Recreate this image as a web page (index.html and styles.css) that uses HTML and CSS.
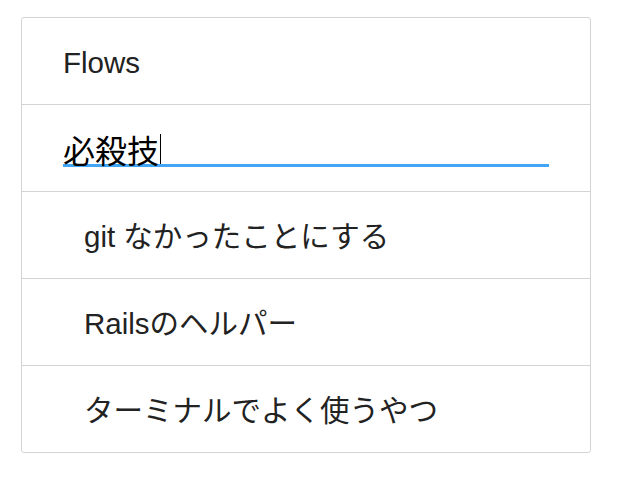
FILE: index.html
```html
<!DOCTYPE html>
<html lang="ja">
<head>
<meta charset="utf-8">
<title>Flows</title>
<link rel="stylesheet" href="styles.css">
</head>
<body>
<div class="card">
  <div class="row header">Flows</div>
  <div class="row search">
    <div class="field"><span class="value">必殺技</span><span class="caret"></span></div>
  </div>
  <div class="row item">git なかったことにする</div>
  <div class="row item">Railsのヘルパー</div>
  <div class="row item">ターミナルでよく使うやつ</div>
</div>
</body>
</html>
```
FILE: styles.css
```css
html, body {
  margin: 0;
  padding: 0;
  background: #ffffff;
}
body {
  font-family: "Liberation Sans", "Noto Sans CJK JP", sans-serif;
  color: #222222;
}
.card {
  margin: 17px 0 0 21px;
  width: 568px;
  border: 1px solid #d4d4d4;
  border-radius: 3px;
  display: flex;
  flex-direction: column;
}
.row {
  height: 86px;
  display: flex;
  align-items: center;
  box-sizing: border-box;
  font-size: 29.5px;
  line-height: 1.2;
  padding-top: 3px;
}
.row + .row {
  border-top: 1px solid #d4d4d4;
  height: 87px;
}
.header {
  padding-left: 41px;
}
.search {
  padding: 0 41px;
  align-items: flex-start;
}
.field {
  flex: 1;
  margin-top: 30px;
  height: 29px;
  border-bottom: 3px solid #42a5f5;
  display: flex;
  align-items: flex-end;
  font-size: 32px;
  color: #000000;
}
.value {
  line-height: 1;
  font-family: "Noto Sans CJK JP", sans-serif;
  margin-bottom: -1px;
}
.caret {
  width: 1px;
  height: 30px;
  background: #000000;
  margin-left: 1px;
}
.item {
  padding-left: 62px;
}
```
